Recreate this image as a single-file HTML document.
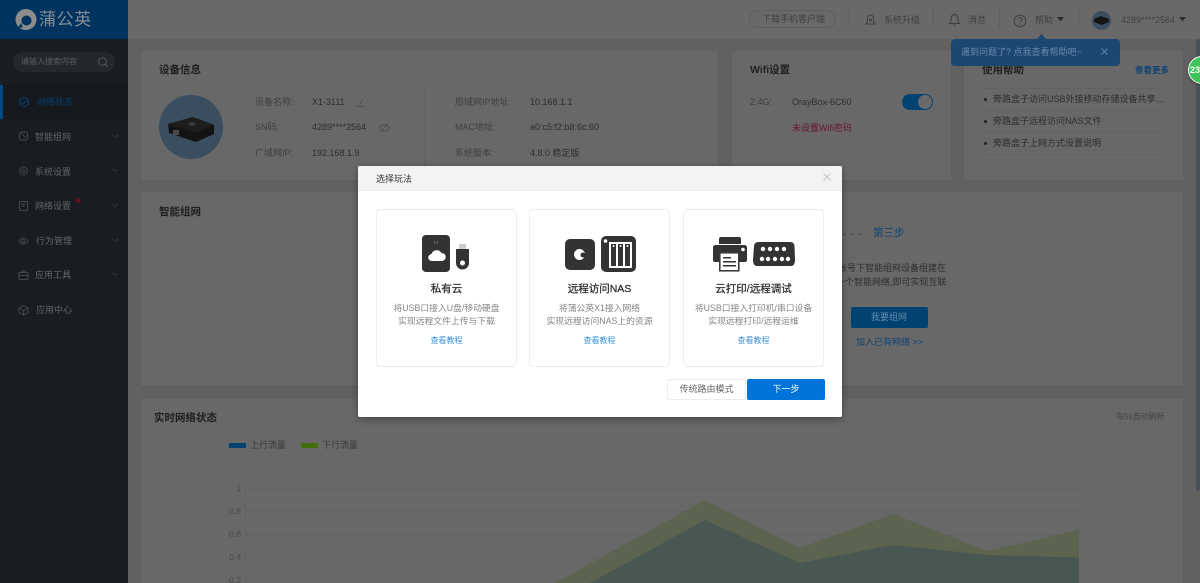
<!DOCTYPE html>
<html><head><meta charset="utf-8"><style>
html,body{margin:0;padding:0;width:1200px;height:583px;overflow:hidden;background:#616161}
body{position:relative;font-family:"Liberation Sans","Noto Sans CJK SC",sans-serif;font-size:9px;color:#363636;filter:blur(.25px)}
.a,.t{position:absolute}
.t{white-space:nowrap;line-height:12px}
.card{position:absolute;background:#686868;box-shadow:0 1px 1px #5e5e5e}
.h{font-size:10.5px;font-weight:bold;color:#202020;line-height:14px}
.l{color:#3f3f3f}.v{color:#2e2e2e}
.m{color:#646464;left:35px}
.bar{position:absolute;width:1px;height:18px;background:#5e5e5e;top:9px}
.hr{position:absolute;height:1px;background:#626262}
.c{position:absolute;background:#fff;border:1px solid #ececec;border-radius:5px;box-sizing:border-box;top:43px;height:158px;width:141px}
.c .x{position:absolute;left:0;right:0;text-align:center;white-space:nowrap}
.c .n{top:72px;font-size:10.5px;line-height:14px;color:#2c2c2c;-webkit-text-stroke:.25px #2c2c2c}
.c .d{font-size:8.8px;color:#858585;line-height:13px}
.c .k{top:125px;font-size:8px;line-height:11px;color:#3b91dc}
</style></head><body>

<!-- sidebar -->
<div class="a" style="left:0;top:0;width:128px;height:583px;background:#191d21"></div>
<div class="a" style="left:0;top:0;width:128px;height:39px;background:#00345f"></div>
<svg class="a" style="left:15px;top:8px" width="22" height="23" viewBox="0 0 22 23"><circle cx="11" cy="11.5" r="10.500" fill="#8c8c8c"/><circle cx="11.500" cy="12.500" r="5" fill="#00345f"/><path d="M6 15l-3 5 5-1z" fill="#00345f"/></svg>
<div class="t" style="left:39px;top:9px;font-size:17px;line-height:22px;color:#858c93;letter-spacing:.6px">蒲公英</div>
<div class="a" style="left:13px;top:52px;width:102px;height:20px;border-radius:10px;background:#24282c"></div>
<div class="t" style="left:21px;top:56px;font-size:8px;color:#5a5f63">请输入搜索内容</div>
<svg class="a" style="left:97px;top:56px" width="12" height="12"><circle cx="5.500" cy="5.500" r="3.800" fill="none" stroke="#52575b"/><path d="M8.300 8.300l2.500 2.500" stroke="#52575b"/></svg>
<div class="a" style="left:0;top:85px;width:128px;height:34px;background:#15181c"></div>
<div class="a" style="left:0;top:85px;width:3px;height:34px;background:#004a82"></div>
<svg class="a" style="left:18px;top:96px" width="12" height="12"><circle cx="6" cy="6" r="4.500" fill="none" stroke="#053f6e" stroke-width="1.100"/><path d="M3 7l2 1 4-4" fill="none" stroke="#053f6e"/></svg>
<div class="t" style="left:37px;top:96px;color:#053f6e">网络状态</div>

<svg class="a" style="left:18px;top:130px" width="12" height="12" fill="none" stroke="#42464a"><rect x="1.500" y="2" width="8" height="8" rx="2"/><path d="M3 3l5 5"/></svg>
<div class="t m" style="top:131px">智能组网</div>
<svg class="a" style="left:18px;top:165px" width="12" height="12" fill="none" stroke="#42464a"><circle cx="5.500" cy="6" r="4"/><circle cx="5.500" cy="6" r="1.500"/></svg>
<div class="t m" style="top:166px">系统设置</div>
<svg class="a" style="left:18px;top:200px" width="12" height="12" fill="none" stroke="#42464a"><rect x="1.500" y="1.500" width="8" height="9"/><path d="M3.500 4h4M3.500 6h3"/></svg>
<div class="t m" style="top:200px">网络设置</div>
<div class="a" style="left:76px;top:198px;width:5px;height:5px;border-radius:50%;background:#6c0a1e"></div>
<svg class="a" style="left:18px;top:235px" width="12" height="12" fill="none" stroke="#42464a"><path d="M1 6c2-4 7-4 9 0-2 4-7 4-9 0z"/><circle cx="5.500" cy="6" r="1.500"/></svg>
<div class="t m" style="top:235px;left:36px">行为管理</div>
<svg class="a" style="left:18px;top:269px" width="12" height="12" fill="none" stroke="#42464a"><rect x="1" y="3.500" width="9" height="7" rx="1"/><path d="M4 3.500V2h3v1.500M1 6.500h9"/></svg>
<div class="t m" style="top:269px">应用工具</div>
<svg class="a" style="left:18px;top:304px" width="12" height="12" fill="none" stroke="#42464a"><path d="M5.500 1.500l4.500 2.500v4.500l-4.500 2.500-4.500-2.500V4zM1 4l4.500 2.500L10 4M5.500 6.500V11"/></svg>
<div class="t m" style="top:304px;left:36px">应用中心</div>
<svg class="a" style="left:110px;top:130px" width="10" height="190" fill="none" stroke="#303438"><path d="M2 4.500l3 2.500 3-2.500M2 39l3 2.500 3-2.500M2 74l3 2.500 3-2.500M2 108.500l3 2.500 3-2.500M2 143l3 2.500 3-2.500"/></svg>

<!-- top bar -->
<div class="a" style="left:128px;top:0;width:1072px;height:39px;background:#696969"></div>
<div class="a" style="left:749px;top:10px;width:87px;height:18px;border:1px solid #5e5e5e;border-radius:9px;box-sizing:border-box"></div>
<div class="t" style="left:762px;top:13px;color:#3f3f3f">下载手机客户端</div>
<div class="bar" style="left:849px"></div><div class="bar" style="left:933px"></div><div class="bar" style="left:999px"></div><div class="bar" style="left:1078px"></div>
<svg class="a" style="left:864px;top:13px" width="13" height="13" fill="none" stroke="#3f3f3f"><path d="M2 11h9L9.500 8V5a3 3 0 0 0-6 0v3z"/><circle cx="6.500" cy="7" r="1"/></svg>
<div class="t" style="left:884px;top:14px;color:#3f3f3f">系统升级</div>
<svg class="a" style="left:948px;top:13px" width="13" height="13" fill="none" stroke="#3f3f3f"><path d="M1.500 10.500h10L10 8V5a3.500 3.500 0 0 0-7 0v3zM5.500 12h2"/></svg>
<div class="t" style="left:968px;top:14px;color:#3f3f3f">消息</div>
<svg class="a" style="left:1013px;top:14px" width="14" height="14" fill="none" stroke="#3f3f3f"><circle cx="7" cy="7" r="5.800"/><path d="M5.200 5.500a1.900 1.900 0 1 1 2.800 1.600c-.7.400-1 .8-1 1.500M7 9.500v1.200"/></svg>
<div class="t" style="left:1035px;top:14px;color:#3f3f3f">帮助</div>
<svg class="a" style="left:1057px;top:17px" width="7" height="5"><path d="M0 0h7L3.500 4.500z" fill="#2e2e2e"/></svg>
<div class="a" style="left:1092px;top:11px;width:19px;height:19px;border-radius:50%;background:#3a4e60"></div>
<svg class="a" style="left:1094px;top:16px" width="15" height="9"><path d="M0 3l7-3 8 3v3l-7 3-8-3z" fill="#151515"/></svg>
<div class="t" style="left:1121px;top:14px;color:#3f3f3f">4289****2564</div>
<svg class="a" style="left:1179px;top:17px" width="7" height="5"><path d="M0 0h7L3.500 4.500z" fill="#2e2e2e"/></svg>

<!-- device card -->
<div class="card" style="left:141px;top:51px;width:577px;height:129px"></div>
<div class="t h" style="left:159px;top:63px">设备信息</div>
<div class="a" style="left:159px;top:95px;width:64px;height:64px;border-radius:50%;background:#3a4e60"></div>
<svg class="a" style="left:168px;top:117px" width="47" height="26"><path d="M0 7L25 0l21 8v9L28 25 1 16z" fill="#131313"/><path d="M0 7L25 0l21 8-18 8z" fill="#1d1d1d"/><ellipse cx="24" cy="7" rx="4" ry="2" fill="#3a3a3a"/><rect x="5" y="13" width="6" height="5" fill="#4a4a4a"/></svg>
<div class="t l" style="left:255px;top:96px">设备名称:</div><div class="t v" style="left:312px;top:96px">X1-3111</div>
<svg class="a" style="left:356px;top:97px" width="10" height="10" fill="none" stroke="#505050"><path d="M1 9.500h8M4 6.500l3-4"/></svg>
<div class="t l" style="left:255px;top:121px">SN码:</div><div class="t v" style="left:312px;top:121px">4289****2564</div>
<svg class="a" style="left:378px;top:122px" width="13" height="11" fill="none" stroke="#505050"><path d="M1 6c3-4 8-4 11 0-3 4-8 4-11 0zM3 9l7-7"/></svg>
<div class="t l" style="left:255px;top:147px">广域网IP:</div><div class="t v" style="left:312px;top:147px">192.168.1.9</div>
<div class="a" style="left:424px;top:88px;width:1px;height:78px;background:#626262"></div>
<div class="t l" style="left:455px;top:96px">局域网IP地址:</div><div class="t v" style="left:530px;top:96px">10.168.1.1</div>
<div class="t l" style="left:455px;top:121px">MAC地址:</div><div class="t v" style="left:530px;top:121px">a0:c5:f2:b8:6c:60</div>
<div class="t l" style="left:455px;top:147px">系统版本:</div><div class="t v" style="left:530px;top:147px">4.8.0 稳定版</div>

<!-- wifi card -->
<div class="card" style="left:732px;top:51px;width:219px;height:129px"></div>
<div class="t h" style="left:750px;top:63px">Wifi设置</div>
<div class="t l" style="left:750px;top:96px">2.4G:</div><div class="t v" style="left:792px;top:96px">OrayBox-6C60</div>
<div class="a" style="left:902px;top:94px;width:31px;height:16px;border-radius:8px;background:#004272"></div>
<div class="a" style="left:918px;top:95px;width:14px;height:14px;border-radius:50%;background:#696969"></div>
<div class="t" style="left:792px;top:122px;color:#6e1230">未设置Wifi密码</div>

<!-- help card -->
<div class="card" style="left:964px;top:51px;width:219px;height:129px"></div>
<div class="t h" style="left:982px;top:63px">使用帮助</div>
<div class="t" style="left:1135px;top:64px;color:#0e4474;font-size:8.500px;font-weight:bold">查看更多</div>
<div class="hr" style="left:982px;top:88px;width:183px"></div><div class="hr" style="left:982px;top:110px;width:183px"></div><div class="hr" style="left:982px;top:132px;width:183px"></div><div class="hr" style="left:982px;top:154px;width:183px"></div>
<div class="a" style="left:984px;top:98px;width:3px;height:3px;border-radius:50%;background:#222"></div>
<div class="a" style="left:984px;top:120px;width:3px;height:3px;border-radius:50%;background:#222"></div>
<div class="a" style="left:984px;top:142px;width:3px;height:3px;border-radius:50%;background:#222"></div>
<div class="t v" style="left:993px;top:93px">旁路盒子访问USB外接移动存储设备共享…</div>
<div class="t v" style="left:993px;top:115px">旁路盒子远程访问NAS文件</div>
<div class="t v" style="left:993px;top:137px">旁路盒子上网方式设置说明</div>

<!-- tooltip -->
<div class="a" style="left:951px;top:39px;width:169px;height:27px;background:#1b4770;border-radius:4px"></div>
<svg class="a" style="left:1036px;top:34px" width="11" height="6"><path d="M0 6l5.500-6L11 6z" fill="#1b4770"/></svg>
<div class="t" style="left:961px;top:46px;color:#668aab">遇到问题了? 点我查看帮助吧~</div>
<svg class="a" style="left:1101px;top:48px" width="7" height="7" stroke="#5f84a6"><path d="M.5.500l6 6M6.500.500l-6 6"/></svg>

<!-- network card -->
<div class="card" style="left:141px;top:192px;width:1042px;height:194px"></div>
<div class="t h" style="left:159px;top:205px">智能组网</div>
<div class="t" style="left:843px;top:228px;color:#0e4474;letter-spacing:1px">- - -</div>
<div class="t" style="left:873px;top:227px;font-size:10.5px;color:#0e4474">第三步</div>
<div class="t v" style="left:838px;top:262px">账号下智能组网设备组建在</div>
<div class="t v" style="left:836px;top:276px">一个智能网络,即可实现互联</div>
<div class="a" style="left:851px;top:307px;width:77px;height:21px;background:#004272;border-radius:2px"></div>
<div class="t" style="left:871px;top:311px;color:#668aab">我要组网</div>
<div class="t" style="left:856px;top:336px;color:#0e4474">加入已有网络 &gt;&gt;</div>

<!-- chart card -->
<div class="card" style="left:141px;top:399px;width:1042px;height:184px"></div>
<div class="t h" style="left:154px;top:411px">实时网络状态</div>
<div class="t" style="left:1116px;top:411px;font-size:8px;color:#444">每5s自动刷新</div>
<div class="a" style="left:229px;top:443px;width:17px;height:5px;background:#004272"></div>
<div class="t" style="left:250px;top:439px;color:#3a3a3a">上行流量</div>
<div class="a" style="left:301px;top:443px;width:17px;height:5px;background:#3f6e0a"></div>
<div class="t" style="left:322px;top:439px;color:#3a3a3a">下行流量</div>
<svg class="a" style="left:0;top:0" width="1200" height="583">
<path d="M245 488.500H1079M245 511.500H1079M245 535.500H1079M245 558.500H1079M245 581.500H1079M245.500 488V583" stroke="#636363" fill="none"/>
<path d="M555 583L705 500L800 548L893 514L987 551L1079 530V583z" fill="#5c634f"/>
<path d="M590 583L705 520L800 563L893 545L987 555L1079 557.500V583z" fill="#485751"/>
<g fill="#4a4a4a" font-size="8.500" font-family="Liberation Sans" text-anchor="end"><text x="241" y="491">1</text><text x="241" y="514">0.8</text><text x="241" y="537">0.6</text><text x="241" y="560">0.4</text><text x="241" y="583">0.2</text></g>
</svg>

<!-- scrollbar and badge -->
<div class="a" style="left:1196px;top:39px;width:4px;height:452px;background:#48505a;border-radius:2px"></div>
<div class="a" style="left:1188px;top:56px;width:28px;height:28px;border-radius:50%;background:#3ec35a;border:1px solid #fff;box-sizing:border-box;box-shadow:0 1px 2px #333"></div>
<div class="t" style="left:1190px;top:64px;font-size:9px;font-weight:bold;color:#fff">23</div>

<!-- modal -->
<div class="a" style="left:358px;top:166px;width:484px;height:251px;background:#fff;border-radius:2px;box-shadow:0 2px 8px rgba(0,0,0,.35);overflow:hidden">
<div class="a" style="left:0;top:0;width:484px;height:24px;background:#f3f3f3;border-bottom:1px solid #ececec"></div>
<div class="t" style="left:18px;top:7px;color:#333">选择玩法</div>
<svg class="a" style="left:465px;top:7px" width="8" height="8" stroke="#c4c4c4"><path d="M.5.500l7 7M7.500.500l-7 7"/></svg>

<div class="c" style="left:18px">
<svg class="a" style="left:45px;top:25px" width="50" height="40"><rect x="0" y="0" width="28" height="37" rx="4" fill="#333"/><text x="14" y="9" text-anchor="middle" font-size="4" font-family="Liberation Sans" fill="#aaa">1T</text><path d="M10 26a3.500 3.500 0 0 1-.5-7 5.500 5.500 0 0 1 10-1 4 4 0 0 1 .5 8z" fill="#fff"/><rect x="37" y="9" width="7" height="5" fill="#ccc"/><path d="M34 14h13v14a6.500 6.500 0 0 1-13 0z" fill="#333"/><circle cx="40.500" cy="28" r="2.500" fill="#fff"/></svg>
<div class="x n">私有云</div><div class="x d" style="top:92px">将USB口接入U盘/移动硬盘</div><div class="x d" style="top:105px">实现远程文件上传与下载</div><div class="x k">查看教程</div></div>

<div class="c" style="left:171px;width:141px">
<svg class="a" style="left:35px;top:26px" width="72" height="37"><rect x="0" y="3" width="30" height="31" rx="5" fill="#333"/><circle cx="14.500" cy="18.500" r="5.500" fill="#fff"/><circle cx="18" cy="19" r="2.500" fill="#333"/><rect x="36" y="0" width="35" height="36" rx="5" fill="#333"/><circle cx="40.500" cy="5" r="1.800" fill="#fff"/><path d="M44 6h23v26H44z" fill="#fff"/><path d="M46 8h5v22h-5zM53 8h5v22h-5zM60 8h5v22h-5z" fill="#333"/><circle cx="48.500" cy="10" r="1" fill="#fff"/><circle cx="55.500" cy="10" r="1" fill="#fff"/><circle cx="62.500" cy="10" r="1" fill="#fff"/></svg>
<div class="x n">远程访问NAS</div><div class="x d" style="top:92px">将蒲公英X1接入网络</div><div class="x d" style="top:105px">实现远程访问NAS上的资源</div><div class="x k">查看教程</div></div>

<div class="c" style="left:325px;width:141px">
<svg class="a" style="left:28px;top:27px" width="86" height="36"><path d="M9 0h18a2 2 0 0 1 2 2v5H7V2a2 2 0 0 1 2-2z" fill="#333"/><path d="M3.500 8h29a2.500 2.500 0 0 1 2.500 2.500V23a2 2 0 0 1-2 2h-6v-10H7v10H3a2 2 0 0 1-2-2V10.500A2.500 2.500 0 0 1 3.500 8z" fill="#333"/><circle cx="31" cy="12.500" r="1.800" fill="#fff"/><rect x="7.800" y="15.800" width="19" height="18" fill="#fff" stroke="#333" stroke-width="1.500"/><path d="M11 20h8v1.500h-8zM11 24h13v1.500H11zM11 28h13v1.500H11z" fill="#333"/><path d="M47 5h31c3 0 4 1.500 4.500 4l.5 14c0 3-1 6-4 6H45c-3 0-4-3-4-6l1-14c.5-3 2-4 5-4z" fill="#333"/><g fill="#fff"><circle cx="51" cy="12" r="2.200"/><circle cx="58" cy="12" r="2.200"/><circle cx="65" cy="12" r="2.200"/><circle cx="72" cy="12" r="2.200"/><circle cx="50" cy="22" r="2.200"/><circle cx="56" cy="22" r="2.200"/><circle cx="63" cy="22" r="2.200"/><circle cx="70" cy="22" r="2.200"/><circle cx="76" cy="22" r="2.200"/></g></svg>
<div class="x n">云打印/远程调试</div><div class="x d" style="top:92px">将USB口接入打印机/串口设备</div><div class="x d" style="top:105px">实现远程打印/远程运维</div><div class="x k">查看教程</div></div>

<div class="a" style="left:309px;top:213px;width:79px;height:21px;border:1px solid #ececec;border-radius:2px;box-sizing:border-box;text-align:center;line-height:19px;color:#666">传统路由模式</div>
<div class="a" style="left:389px;top:213px;width:78px;height:21px;background:#0074d9;border-radius:2px;text-align:center;line-height:21px;color:#fff">下一步</div>
</div>
</body></html>
